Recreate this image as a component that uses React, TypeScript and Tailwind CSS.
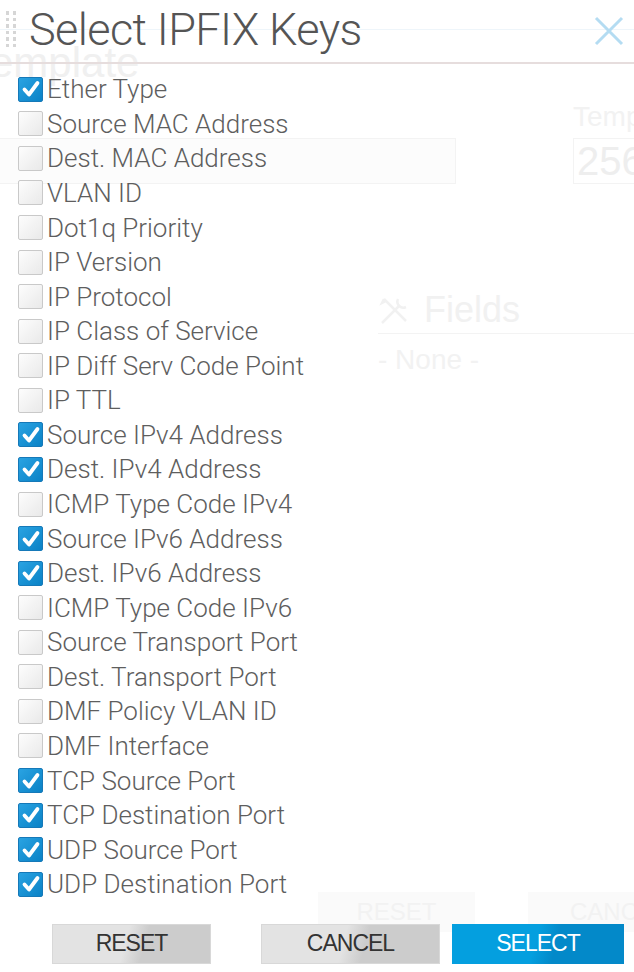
import React from "react";

const items: [string, boolean][] = [
  ["Ether Type", true],
  ["Source MAC Address", false],
  ["Dest. MAC Address", false],
  ["VLAN ID", false],
  ["Dot1q Priority", false],
  ["IP Version", false],
  ["IP Protocol", false],
  ["IP Class of Service", false],
  ["IP Diff Serv Code Point", false],
  ["IP TTL", false],
  ["Source IPv4 Address", true],
  ["Dest. IPv4 Address", true],
  ["ICMP Type Code IPv4", false],
  ["Source IPv6 Address", true],
  ["Dest. IPv6 Address", true],
  ["ICMP Type Code IPv6", false],
  ["Source Transport Port", false],
  ["Dest. Transport Port", false],
  ["DMF Policy VLAN ID", false],
  ["DMF Interface", false],
  ["TCP Source Port", true],
  ["TCP Destination Port", true],
  ["UDP Source Port", true],
  ["UDP Destination Port", true],
];

const font = { fontFamily: '"Liberation Sans", Arial, sans-serif' };
const light = { fontFamily: 'Roboto, "Liberation Sans", sans-serif', fontWeight: 300 };

function Box({ checked }: { checked: boolean }) {
  if (checked) {
    return (
      <div className="w-[25px] h-[25px] shrink-0 rounded-[2px] border border-[#1679b8] bg-[linear-gradient(135deg,#2aa3e2,#0a82c6)] flex items-center justify-center">
        <svg width="20" height="20" viewBox="0 0 20 20">
          <path d="M3.5 10.5 L8 15.5 L16.5 4" fill="none" stroke="white" strokeWidth="3.8" strokeLinecap="round" strokeLinejoin="round" />
        </svg>
      </div>
    );
  }
  return (
    <div className="w-[25px] h-[25px] shrink-0 rounded-[2px] border border-[#c9c9c9] bg-[linear-gradient(135deg,#fdfdfd,#e9e9e9)]" />
  );
}

function Ghost() {
  return (
    <div className="flex flex-col h-full text-[#f1f1f1]" style={font}>
      <div className="h-[30px] shrink-0 border-b border-[#eef5fa]" />
      <div className="ml-[-31px] mt-[12px] text-[42px] leading-[42px] text-[#f0f0f0] whitespace-nowrap">Template</div>
      <div className="flex mt-[18px]">
        <div className="w-[573px] shrink-0" />
        <div className="text-[28px] leading-[30px] text-[#f2f2f2] whitespace-nowrap">Template</div>
      </div>
      <div className="flex mt-[6px] items-stretch">
        <div className="w-[458px] shrink-0 h-[46px] border border-[#f3f3f3] bg-[#fcfcfc] ml-[-2px]" />
        <div className="w-[117px] shrink-0" />
        <div className="w-[80px] shrink-0 h-[46px] border border-[#f3f3f3] flex items-center px-[3px] text-[40px] text-[#eeeeee]">256</div>
      </div>
      <div className="ml-[378px] mt-[106px] flex items-center gap-[12px] pb-[3px] border-b border-[#f3f3f3]">
        <svg width="34" height="34" viewBox="0 0 34 34" fill="none" stroke="#f1f1f1" strokeWidth="2.5">
          <path d="M4 30 L22 12 M20 6 a6 6 0 0 0 8 8 M6 6 L28 28 M6 6 l-2 4 l4 -2" />
        </svg>
        <div className="text-[36px] leading-[40px]">Fields</div>
      </div>
      <div className="ml-[378px] mt-[10px] text-[28px] leading-[32px] text-[#f2f2f2]">- None -</div>
      <div className="mt-auto mb-[40px] flex">
        <div className="ml-[318px] shrink-0 w-[157px] h-[40px] bg-[#fafafa] flex items-center justify-center text-[24px] text-[#f2f2f2]">RESET</div>
        <div className="ml-[53px] shrink-0 w-[120px] h-[40px] bg-[#fafafa] flex items-center pl-[42px] text-[24px] text-[#f2f2f2] whitespace-nowrap">CANCEL</div>
      </div>
    </div>
  );
}

function Dots() {
  return (
    <div className="grid grid-cols-2 gap-x-[3px] gap-y-[3px] w-[10px]">
      {Array.from({ length: 12 }).map((_, i) => (
        <div key={i} className="w-[3px] h-[3.5px] bg-[#d6d6d6]" />
      ))}
    </div>
  );
}

export default function App() {
  return (
    <div className="relative w-[634px] h-[972px] overflow-hidden bg-white">
      <Ghost />
      <div className="absolute inset-0 flex flex-col" style={font}>
        <div className="h-[64px] shrink-0 border-b-2 border-[#e6dddd] flex items-start">
          <div className="ml-[6px] mt-[11px]">
            <Dots />
          </div>
          <div className="ml-[13px] mt-[5px] text-[45px] leading-[50px] tracking-[-0.6px] text-[#555555] whitespace-nowrap" style={light}>Select IPFIX Keys</div>
          <div className="ml-auto mr-[10px] mt-[16px]">
            <svg width="30" height="30" viewBox="0 0 30 30">
              <path d="M2 2 L28 28 M28 2 L2 28" stroke="#b4dcf2" strokeWidth="3" />
            </svg>
          </div>
        </div>
        <div className="flex flex-col pt-[8px] pl-[18px]">
          {items.map(([label, checked]) => (
            <div key={label} className="h-[34.57px] flex items-center">
              <Box checked={checked} />
              <span className="ml-[4px] text-[26px] leading-[30px] text-[#5e5e5e] whitespace-nowrap" style={light}>{label}</span>
            </div>
          ))}
        </div>
        <div className="flex mt-[22px]">
          <button className="ml-[52px] shrink-0 w-[159px] h-[40px] border border-[#d8d8d8] bg-[linear-gradient(105deg,#e3e3e3_46%,#cccccc_58%)] text-[23px] tracking-[-1px] text-[#333333]">RESET</button>
          <button className="ml-[50px] shrink-0 w-[179px] h-[40px] border border-[#d8d8d8] bg-[linear-gradient(105deg,#e3e3e3_46%,#cccccc_58%)] text-[23px] tracking-[-1px] text-[#333333]">CANCEL</button>
          <button className="ml-[12px] shrink-0 w-[172px] h-[40px] bg-[linear-gradient(105deg,#049fdf_48%,#0389c9_60%)] text-[23px] tracking-[-1px] text-white">SELECT</button>
        </div>
      </div>
    </div>
  );
}
